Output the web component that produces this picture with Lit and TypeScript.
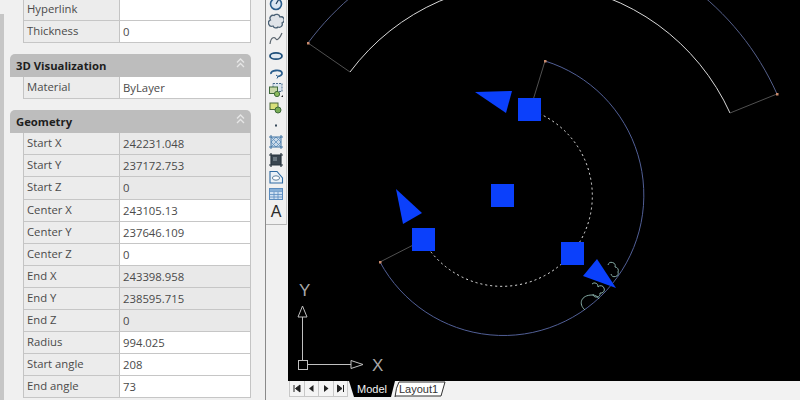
import { LitElement, css, html, svg } from 'lit';
import { customElement } from 'lit/decorators.js';

type Row = { label: string; value: string; readonly?: boolean };

const generalRows: Row[] = [
  { label: 'Hyperlink', value: '' },
  { label: 'Thickness', value: '0' },
];

const materialRows: Row[] = [{ label: 'Material', value: 'ByLayer' }];

const geometryRows: Row[] = [
  { label: 'Start X', value: '242231.048', readonly: true },
  { label: 'Start Y', value: '237172.753', readonly: true },
  { label: 'Start Z', value: '0', readonly: true },
  { label: 'Center X', value: '243105.13' },
  { label: 'Center Y', value: '237646.109' },
  { label: 'Center Z', value: '0' },
  { label: 'End X', value: '243398.958', readonly: true },
  { label: 'End Y', value: '238595.715', readonly: true },
  { label: 'End Z', value: '0', readonly: true },
  { label: 'Radius', value: '994.025' },
  { label: 'Start angle', value: '208' },
  { label: 'End angle', value: '73' },
];

const toolIcons = [
  svg`<circle cx="8" cy="8" r="5.5" fill="#dbe6f2" stroke="#2b5d8c" stroke-width="1.6"/><path d="M8 8 L11 3" stroke="#1d3c5c" stroke-width="1.2"/>`,
  svg`<path d="M2.5 7 A3 3 0 0 1 6 2.5 A3.5 3.5 0 0 1 12 4 A3 3 0 0 1 14 10 A3 3 0 0 1 10 14 A3 3 0 0 1 5 13 A3 3 0 0 1 2.5 7z" fill="#dfe3e8" stroke="#4a6074" stroke-width="1.3"/>`,
  svg`<path d="M2 14 C3 6 7 7 8 9 C9 11 12 8 14 3" fill="none" stroke="#5a646d" stroke-width="1.2"/>`,
  svg`<ellipse cx="8" cy="8" rx="6" ry="3.2" fill="#dfe8f0" stroke="#1f4f7a" stroke-width="1.8"/>`,
  svg`<path d="M3 9 C2 5 13 4 14 8 C14.5 10 12 11 10 11.5" fill="none" stroke="#2a5d8c" stroke-width="1.8"/><path d="M8 10 l2 1.5 l-1 2" fill="none" stroke="#2a5d8c" stroke-width="1"/>`,
  svg`<rect x="5" y="1.5" width="9" height="8" fill="#dce6ef" stroke="#4b6d8d" stroke-dasharray="2 1"/><rect x="1.5" y="5" width="8" height="6.5" fill="#c9d8a8" stroke="#3f6a3a"/><circle cx="9" cy="12" r="2.6" fill="#8dbb5c" stroke="#3f6a3a"/><path d="M13 15 h2 v-2z" fill="#222"/>`,
  svg`<rect x="2" y="3" width="8" height="6.5" fill="#d9e07a" stroke="#4c6a3a"/><circle cx="10" cy="10" r="3" fill="#78ad55" stroke="#3f6a3a"/>`,
  svg`<rect x="7" y="7.5" width="2" height="2" fill="#37495a"/>`,
  svg`<rect x="3" y="3" width="10" height="10" fill="#c9d9e8"/><path d="M3 8 L8 3 M3 13 L13 3 M8 13 L13 8 M3 8 L8 13 M3 3 L13 13 M8 3 L13 8" stroke="#5f8fbb" stroke-width=".8"/><path d="M1 3 h14 M1 13 h14 M3 1 v14 M13 1 v14" stroke="#3f72a2"/>`,
  svg`<rect x="3" y="3" width="10" height="10" fill="#3a4650"/><path d="M1 3 h14 M1 13 h14 M3 1 v14 M13 1 v14" stroke="#26333d" stroke-width="1.2"/><path d="M5 5 h4 v4 h-4z" fill="#6b7881"/>`,
  svg`<path d="M2 2.5 H9 L14.5 9 V14 H2z" fill="#eaf1f7" stroke="#2f6ba3" stroke-width="1.1"/><ellipse cx="8" cy="9" rx="3.6" ry="2.2" fill="#fff" stroke="#5d7f9c"/>`,
  svg`<rect x="1.5" y="2.5" width="13" height="11" fill="#cfe0f2" stroke="#5a8cbf"/><path d="M1.5 5.5 h13 M1.5 8.5 h13 M1.5 11 h13 M6 5.5 v8 M10 5.5 v8" stroke="#5a8cbf" stroke-width=".8"/><rect x="2" y="3" width="12" height="2.5" fill="#86aed6"/>`,
];

@customElement('app-root')
export class AppRoot extends LitElement {
  static styles = css`
    :host {
      display: block;
      width: 800px;
      height: 400px;
      overflow: hidden;
      background: #f0f0f0;
      font-family: 'Open Sans', 'Liberation Sans', sans-serif;
    }

    .screen {
      display: flex;
      height: 400px;
    }

    .strip {
      width: 4px;
      margin-top: 14px;
      background: #c6c6c6;
      flex: none;
    }

    .panel {
      width: 247px;
      flex: none;
      padding-left: 6px;
      box-sizing: border-box;
    }

    .rows {
      margin-left: 13px;
      border-left: 1px solid #c4c4c4;
      border-right: 1px solid #c4c4c4;
    }

    .rows.first {
      margin-top: -1px;
    }

    .row {
      display: grid;
      grid-template-columns: 96px 1fr;
      grid-template-rows: minmax(0, 1fr);
      height: 22.1px;
      box-sizing: border-box;
      border-bottom: 1px solid #c6c6c6;
      font-size: 11.3px;
      color: #4a4a4a;
    }

    .row > div {
      padding-left: 3px;
      white-space: nowrap;
      overflow: hidden;
    }

    .label {
      background: #ececec;
      border-right: 1px solid #c4c4c4;
      line-height: 19px;
    }

    .value {
      background: #fff;
      line-height: 21px;
    }

    .value.readonly {
      background: #e9e9e9;
    }

    .header {
      display: flex;
      align-items: center;
      justify-content: space-between;
      height: 23px;
      box-sizing: border-box;
      margin-top: 11px;
      padding: 0 6px 1px 6px;
      background: #bdbdbd;
      border-radius: 5px 5px 0 0;
      font-size: 11.3px;
      font-weight: 700;
      color: #1e1e1e;
    }

    .header svg {
      display: block;
      margin-bottom: 5px;
    }

    .divider {
      width: 14px;
      flex: none;
      border-right: 1px solid #8a8a8a;
    }

    .toolbar {
      width: 21px;
      height: 225px;
      flex: none;
      overflow: hidden;
      border-bottom: 1px solid #b4b4b4;
      border-right: 1px solid #c8c8c8;
      box-sizing: border-box;
    }

    .tools {
      display: flex;
      flex-direction: column;
      align-items: center;
      margin-top: -5px;
    }

    .tool {
      height: 17.35px;
      display: flex;
      align-items: center;
      justify-content: center;
      flex: none;
    }

    .tool svg {
      display: block;
    }

    .tool.letter {
      font-family: 'Liberation Sans', sans-serif;
      font-size: 16px;
      color: #2a2a2a;
      line-height: 17px;
    }

    .main {
      flex: 1;
      display: flex;
      flex-direction: column;
      margin-left: 1px;
    }

    .canvas {
      display: block;
      background: #000;
    }

    .tabbar {
      flex: 1;
      display: flex;
      align-items: flex-start;
      background: #f2f2f2;
    }

    .nav {
      display: flex;
      margin-left: 1px;
      border: 1px solid #c8c8c8;
      border-top: none;
      background: #f4f4f4;
    }

    .nav span {
      display: flex;
      align-items: center;
      justify-content: center;
      width: 13.5px;
      height: 15px;
      border-right: 1px solid #c8c8c8;
    }

    .nav span:last-child {
      border-right: none;
    }

    .tabs {
      display: block;
    }

    .tabs text {
      font-family: 'Liberation Sans', sans-serif;
      font-size: 11px;
    }

    .ucs-letter {
      font-family: 'Liberation Sans', sans-serif;
      font-size: 17px;
      fill: #a8a8a8;
    }
  `;

  private renderRows(rows: Row[], first = false) {
    return html`
      <div class="rows ${first ? 'first' : ''}">
        ${rows.map(
          (row) => html`
            <div class="row">
              <div class="label">${row.label}</div>
              <div class="value ${row.readonly ? 'readonly' : ''}">${row.value}</div>
            </div>
          `,
        )}
      </div>
    `;
  }

  private renderHeader(title: string) {
    return html`
      <div class="header">
        <span>${title}</span>
        <svg width="9" height="10" viewBox="0 0 9 10" fill="none" stroke="#e6e6e6" stroke-width="1.3">
          <path d="M1 4.5 L4.5 1 L8 4.5 M1 9 L4.5 5.5 L8 9" />
        </svg>
      </div>
    `;
  }

  private renderCanvas() {
    const blue = '#0b40fb';
    return html`
      <svg class="canvas" width="512" height="381" viewBox="288 0 512 381" fill="none">
        <!-- upper arc pair -->
        <path d="M308 43 A273 273 0 0 1 777 94" stroke="#545f8a" />
        <path d="M350 72 A222 222 0 0 1 730 113" stroke="#d8d8d8" />
        <path d="M308 43 L350 72 M777 94 L730 113" stroke="#505050" />

        <!-- selected arc pair -->
        <path d="M545 61 A140.4 140.4 0 1 1 380 262" stroke="#515f96" />
        <path d="M530 110 A90.4 90.4 0 1 1 423 240" stroke="#eeeeee" stroke-dasharray="2 3" />
        <path d="M545 61 L530 110 M380 262 L423 240" stroke="#505050" />

        <g fill="#c98a6c">
          <rect x="307" y="42" width="2.5" height="2.5" />
          <rect x="776" y="93" width="2.5" height="2.5" />
          <rect x="544" y="60" width="2.5" height="2.5" />
          <rect x="379" y="261" width="2.5" height="2.5" />
        </g>

        <!-- revision cloud scallops -->
        <g stroke="#86ada6">
          <path d="M608 265 a3.5 3.5 0 0 1 7 2 a3.5 3.5 0 0 1 3 5 a3.5 3.5 0 0 1-7 2" />
          <path d="M592 284 a3.5 3.5 0 0 1 6 3 a3.5 3.5 0 0 1 6 1 a3.5 3.5 0 0 1-4 5 a3.5 3.5 0 0 1-7 1" />
          <path d="M585 310 C578 304 581 295 592 295 C596 295 598 297 599 299" />
        </g>

        <g fill=${blue}>
          <polygon points="475,92 512,91 506,113" />
          <polygon points="396,189 422,213 403,224" />
          <polygon points="597,259 583,276 616,288" />
          <rect x="518" y="98" width="23" height="23" />
          <rect x="491" y="184" width="23" height="23" />
          <rect x="412" y="228" width="23" height="23" />
          <rect x="561" y="242" width="23" height="23" />
        </g>

        <!-- UCS icon -->
        <g stroke="#c0c0c0">
          <path d="M302.5 317 V360 M307 364.5 H351" />
          <rect x="298.5" y="360.5" width="9" height="9" />
          <polygon points="302.5,306 298,317 307,317" />
          <polygon points="351,360.5 363,364.5 351,368.5" />
        </g>
        <text class="ucs-letter" x="299" y="296">Y</text>
        <text class="ucs-letter" x="372" y="371">X</text>
      </svg>
    `;
  }

  private renderTabBar() {
    const navIcons = [
      svg`<path d="M2 2 V9 M8 2 L3.5 5.5 L8 9z" stroke="#222" fill="#222"/>`,
      svg`<path d="M7.5 2 L3 5.5 L7.5 9z" fill="#222"/>`,
      svg`<path d="M3 2 L7.5 5.5 L3 9z" fill="#222"/>`,
      svg`<path d="M8.5 2 V9 M2.5 2 L7 5.5 L2.5 9z" stroke="#222" fill="#222"/>`,
    ];
    return html`
      <div class="tabbar">
        <div class="nav">
          ${navIcons.map(
            (icon) => html`<span><svg width="10" height="11" viewBox="0 0 10 11">${icon}</svg></span>`,
          )}
        </div>
        <svg class="tabs" width="110" height="19" viewBox="0 0 110 19">
          <polygon points="1,0 47,0 43,16 6,16" fill="#000" />
          <text x="9" y="12" fill="#f2f2f2">Model</text>
          <path d="M47 16 Q48 6 51 1 H97 L93 15 H47" fill="#fff" stroke="#333" />
          <text x="51" y="12" fill="#333">Layout1</text>
        </svg>
      </div>
    `;
  }

  render() {
    return html`
      <div class="screen">
        <div class="strip"></div>
        <div class="panel">
          ${this.renderRows(generalRows, true)}
          ${this.renderHeader('3D Visualization')}
          ${this.renderRows(materialRows)}
          ${this.renderHeader('Geometry')}
          ${this.renderRows(geometryRows)}
        </div>
        <div class="divider"></div>
        <div class="toolbar">
          <div class="tools">
            ${toolIcons.map(
              (icon) => html`
                <div class="tool">
                  <svg width="16" height="16" viewBox="0 0 16 16">${icon}</svg>
                </div>
              `,
            )}
            <div class="tool letter">A</div>
          </div>
        </div>
        <div class="main">
          ${this.renderCanvas()}
          ${this.renderTabBar()}
        </div>
      </div>
    `;
  }
}
